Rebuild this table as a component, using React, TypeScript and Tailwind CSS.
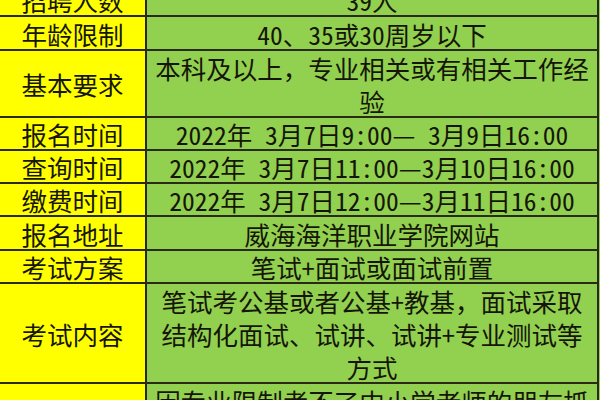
import React from 'react';

type Row = { label: string; value: string; h: string };

const rows: Row[] = [
  { label: '招聘人数', value: '39人', h: 'h-[33px]' },
  { label: '年龄限制', value: '40、35或30周岁以下', h: 'h-[34px]' },
  { label: '基本要求', value: '本科及以上，专业相关或有相关工作经验', h: 'h-[67px]' },
  { label: '报名时间', value: '2022年 3月7日9:00— 3月9日16:00', h: 'h-[33px]' },
  { label: '查询时间', value: '2022年 3月7日11:00—3月10日16:00', h: 'h-[33px]' },
  { label: '缴费时间', value: '2022年 3月7日12:00—3月11日16:00', h: 'h-[33px]' },
  { label: '报名地址', value: '威海海洋职业学院网站', h: 'h-[34px]' },
  { label: '考试方案', value: '笔试+面试或面试前置', h: 'h-[33px]' },
  { label: '考试内容', value: '笔试考公基或者公基+教基，面试采取结构化面试、试讲、试讲+专业测试等方式', h: 'h-[100px]' },
  { label: '温馨提示', value: '因专业限制考不了中小学老师的朋友抓紧时间关注本次招聘，机会难得，欢迎报名参加', h: 'h-[100px]' },
];

// half-width forms for the latin runs only (digits, colon, space, plus)
function Mixed({ text }: { text: string }) {
  const parts = text.split(/([\x20-\x7e]+)/);
  return (
    <>
      {parts.map((p, i) =>
        i % 2 === 1 ? (
          <span key={i} className="[font-feature-settings:'hwid']">
            {p}
          </span>
        ) : (
          p
        )
      )}
    </>
  );
}

export default function App() {
  return (
    <div className="w-[600px] h-[400px] overflow-hidden bg-[#92d050]">
      <div className="-mt-[16px] grid grid-cols-[147px_452px] text-[25.5px] leading-[33px] text-[#161608] font-['Noto_Sans_CJK_SC','Liberation_Sans',sans-serif]">
        {rows.map((r) => (
          <React.Fragment key={r.label}>
            <div
              className={`${r.h} flex items-center justify-center text-center bg-[#ffff00] border-b-2 border-r-2 border-[#2a2a18]`}
            >
              {r.label}
            </div>
            <div
              className={`${r.h} flex items-center justify-center text-center px-[4px] bg-[#92d050] border-b-2 border-r-2 border-[#2a2a18]`}
            >
              <span>
                <Mixed text={r.value} />
              </span>
            </div>
          </React.Fragment>
        ))}
      </div>
    </div>
  );
}
